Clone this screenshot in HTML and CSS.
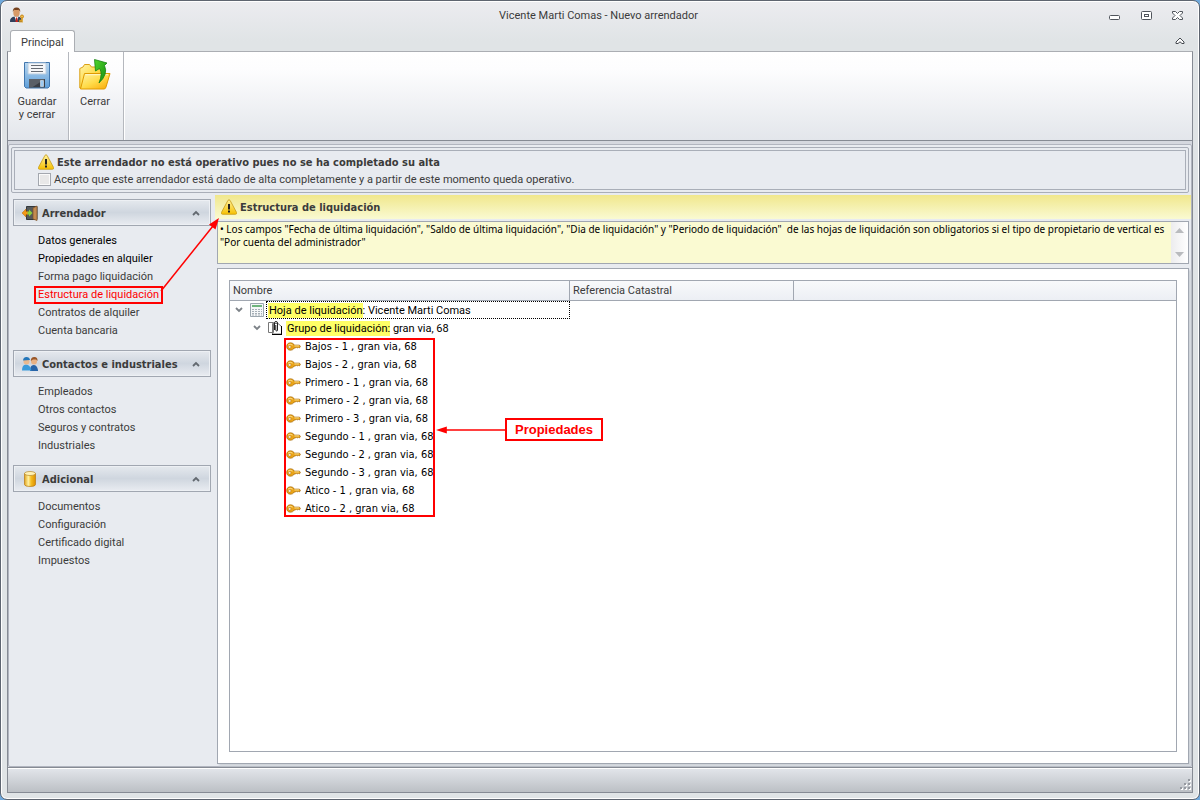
FILE: index.html
```html
<!DOCTYPE html>
<html lang="es">

<head>
    <meta charset="UTF-8">
    <meta name="viewport" content="width=device-width, initial-scale=1.0">
    <title>Vicente Marti Comas - Nuevo arrendador</title>
    <link rel="stylesheet" href="styles.css">
</head>

<body>
    <!-- shared icons -->
    <svg class="sprite">
        <defs>
            <linearGradient id="gold" x1="0" y1="0" x2="0" y2="1">
                <stop offset="0" stop-color="#fff3a0" />
                <stop offset="1" stop-color="#f6c000" />
            </linearGradient>
            <linearGradient id="folder" x1="0" y1="0" x2="1" y2="1">
                <stop offset="0" stop-color="#fff3a8" />
                <stop offset="0.5" stop-color="#ffdc4a" />
                <stop offset="1" stop-color="#f9a602" />
            </linearGradient>
            <linearGradient id="disk" x1="0" y1="0" x2="0" y2="1">
                <stop offset="0" stop-color="#b9d7f0" />
                <stop offset="1" stop-color="#5f9fd9" />
            </linearGradient>
            <linearGradient id="green" x1="0" y1="0" x2="1" y2="1">
                <stop offset="0" stop-color="#4fd62a" />
                <stop offset="1" stop-color="#158a12" />
            </linearGradient>
            <linearGradient id="barrel" x1="0" y1="0" x2="1" y2="0">
                <stop offset="0" stop-color="#e2a51c" />
                <stop offset="0.35" stop-color="#fff0a0" />
                <stop offset="0.6" stop-color="#f5bd20" />
                <stop offset="1" stop-color="#dc8f00" />
            </linearGradient>
        </defs>
        <symbol id="warning" viewBox="0 0 16 16">
            <path d="M7 1.300Q8 .2 9 1.300L15.600 13.500Q16 15.300 14.500 15.300H1.500Q0 15.300.4 13.500Z" fill="url(#gold)" stroke="#c79a18" stroke-width=".8" />
            <path d="M7 5h2v5.500H7zM7 11.500h2v2H7z" fill="#222" />
        </symbol>
        <symbol id="key" viewBox="0 0 16 12">
            <path d="M4.500 2C7 2 8.200 3 8.800 4.500H14.500L15.500 6l-1 1.500-1.200-.8-1 1-1.200-1-1 1H8.700C8 9.300 6.500 10 4.500 10 2 10 .6 8.200.6 6S2 2 4.500 2Z" fill="#e9a318" stroke="#a76a08" stroke-width=".8" />
            <path d="M2 4.500Q4 2.300 7 4.500M9 5.400h5" stroke="#ffe591" fill="none" />
            <ellipse cx="3.800" cy="6.500" rx="1.500" ry="1.200" fill="#fff" stroke="#a76a08" stroke-width=".5" />
        </symbol>
        <symbol id="up" viewBox="0 0 8 6">
            <path d="M1 5 4 2 7 5" fill="none" stroke="#636970" stroke-width="1.800" />
        </symbol>
        <symbol id="down" viewBox="0 0 8 6">
            <path d="M1 1 4 4 7 1" fill="none" stroke="#7d8288" stroke-width="1.800" />
        </symbol>
    </svg>

    <div class="window">
        <header class="titlebar">
            <svg class="app-icon" viewBox="0 0 16 16">
                <path d="M1 15q-.5-5 5-5.500h3q4 .5 4 5.500Z" fill="#30405c" />
                <path d="M5.500 9.500 7.500 15l2-5.500Z" fill="#fff" />
                <path d="M7 10.500h1.200l.6 4.500H6.500Z" fill="#d02018" />
                <ellipse cx="7.500" cy="5.500" rx="3.200" ry="4.300" fill="#d99a68" />
                <path d="M3.800 5Q3.500.5 7.500.4 11.500.3 11.200 5q-.8-2-1.700-2.200-2.500.6-4.200 0Q4.300 3.500 3.800 5Z" fill="#75401e" />
                <circle cx="13" cy="9.500" r="1.500" fill="#f0bd4a" stroke="#c98716" />
                <path d="M13 11v4.500M13 13.500h-2v2" fill="none" stroke="#d89a20" stroke-width="1.500" />
            </svg>
            <span class="title">Vicente Marti Comas - Nuevo arrendador</span>
            <div class="controls">
                <button type="button" aria-label="Minimizar">
                    <svg viewBox="0 0 13 11"><rect x="1.500" y="5.500" width="10" height="4" rx="1" fill="#fff" stroke="#50555c" /></svg>
                </button>
                <button type="button" aria-label="Restaurar">
                    <svg viewBox="0 0 13 11"><rect x="1.500" y="1.500" width="10" height="8" rx="1" fill="#fff" stroke="#50555c" /><rect x="4.500" y="4.500" width="4" height="2" fill="#fff" stroke="#50555c" /></svg>
                </button>
                <button type="button" aria-label="Cerrar ventana">
                    <svg viewBox="0 0 13 11"><path d="M.5 1.500h3l2 2 2-2h3v1.500L8 5.500l2.500 2.500v1.500h-3l-2-2-2 2h-3V8L3 5.500.5 3Z" fill="#fff" stroke="#50555c" /></svg>
                </button>
            </div>
        </header>

        <div class="tabs">
            <button type="button" class="tab">Principal</button>
            <button type="button" class="collapse" aria-label="Contraer">
                <svg viewBox="0 0 10 8"><path d="M5 1 9 5v1.500H7L5 4.800 3 6.500H1V5Z" fill="#fff" stroke="#454a50" /></svg>
            </button>
        </div>

        <div class="ribbon">
            <button type="button" class="tool save">
                <svg viewBox="0 0 32 32">
                    <path d="M3.500 3.500h25v24l-1.500 1.500H5L3.500 27.500Z" fill="url(#disk)" stroke="#4277ae" />
                    <path d="M7 4h18v11H7z" fill="#f5f6f8" stroke="#b7cce0" />
                    <path d="M10 6.500h12M10 9.500h12M10 12.500h12" stroke="#666b73" />
                    <path d="M8 20h16v8.500H8z" fill="#3a3e45" />
                    <path d="M8 20h16l-13 8.500H8z" fill="#5a5f66" />
                    <path d="M19.500 21.500h3v6h-3z" fill="#9dcbf2" stroke="#e1effb" stroke-width=".6" />
                </svg>
                <span>Guardar<br>y cerrar</span>
            </button>
            <button type="button" class="tool close">
                <svg viewBox="0 0 32 32">
                    <path d="M.8 29V9.500L4 8l1.500-2.500h5L12.500 8H23l1.500 2v19Z" fill="url(#folder)" stroke="#dba015" />
                    <path d="M1.500 30 5.500 14.500h25.500L27 28q-.5 2-2 2Z" fill="url(#folder)" stroke="#e09a00" />
                    <path d="M6.500 15.700H29" stroke="#fff8cc" />
                    <path d="M15.500.5 28 4l-2.500 2.500Q29.500 15 20 24q4-10 .5-14.500L16.500 12Z" fill="url(#green)" stroke="#158212" stroke-width=".8" />
                </svg>
                <span>Cerrar</span>
            </button>
        </div>

        <div class="workspace">
            <div class="frame">
                <div class="notice">
                    <div class="notice-inner">
                        <strong><svg class="warn"><use href="#warning" /></svg>Este arrendador no está operativo pues no se ha completado su alta</strong>
                        <label><input type="checkbox">Acepto que este arrendador está dado de alta completamente y a partir de este momento queda operativo.</label>
                    </div>
                </div>

                <div class="columns">
                    <nav class="sidebar">
                        <section>
                            <button type="button" class="group">
                                <svg class="group-icon" viewBox="0 0 16 16">
                                    <path d="M4.500 1.500H15v13H4.500z" fill="#555a5c" stroke="#33383b" />
                                    <path d="m11 3 4-2v14.500L11 14Z" fill="#c28b51" stroke="#805127" stroke-width=".7" />
                                    <path d="M0 8 4 4v2.500h2v3H4V12Z" fill="#f39a15" stroke="#bd6709" stroke-width=".5" />
                                    <path d="M10.500 8 7 4.500v2H5.500v3H7v2Z" fill="#8bd03c" />
                                </svg>
                                <span>Arrendador</span>
                                <svg class="chevron"><use href="#up" /></svg>
                            </button>
                            <ul>
                                <li><a href="#" class="enabled">Datos generales</a></li>
                                <li><a href="#" class="enabled">Propiedades en alquiler</a></li>
                                <li><a href="#">Forma pago liquidación</a></li>
                                <li><a href="#" class="marked">Estructura de liquidación</a></li>
                                <li><a href="#">Contratos de alquiler</a></li>
                                <li><a href="#">Cuenta bancaria</a></li>
                            </ul>
                        </section>
                        <section>
                            <button type="button" class="group">
                                <svg class="group-icon" viewBox="0 0 16 16">
                                    <path d="M8 15q0-6 3.500-6t4.500 5v1Z" fill="#2864a8" />
                                    <circle cx="12" cy="5.500" r="3" fill="#e8b184" />
                                    <path d="M8.800 5q0-4 3.500-4t3.200 4L14 3.500H11Z" fill="#9a5728" />
                                    <path d="M0 14.500Q0 8.500 4 8.500t5.500 6Z" fill="#3a9bdb" />
                                    <circle cx="4.500" cy="5.500" r="3" fill="#e9b98e" />
                                    <path d="M1 4.500Q1.200 1 4.500 1 7.500 1 8 4Z" fill="#2476b9" />
                                </svg>
                                <span>Contactos e industriales</span>
                                <svg class="chevron"><use href="#up" /></svg>
                            </button>
                            <ul>
                                <li><a href="#">Empleados</a></li>
                                <li><a href="#">Otros contactos</a></li>
                                <li><a href="#">Seguros y contratos</a></li>
                                <li><a href="#">Industriales</a></li>
                            </ul>
                        </section>
                        <section>
                            <button type="button" class="group">
                                <svg class="group-icon" viewBox="0 0 16 16">
                                    <path d="M2.500 2.500v11q0 2 5.500 2t5.500-2v-11Z" fill="url(#barrel)" stroke="#b87913" stroke-width=".7" />
                                    <ellipse cx="8" cy="2.500" rx="5.500" ry="2" fill="#fff1b4" stroke="#b8892c" stroke-width=".7" />
                                </svg>
                                <span>Adicional</span>
                                <svg class="chevron"><use href="#up" /></svg>
                            </button>
                            <ul>
                                <li><a href="#">Documentos</a></li>
                                <li><a href="#">Configuración</a></li>
                                <li><a href="#">Certificado digital</a></li>
                                <li><a href="#">Impuestos</a></li>
                            </ul>
                        </section>
                        <svg class="arrow-menu" viewBox="0 0 62 80">
                            <path d="M3 74 55 9" stroke="#f00" stroke-width="1.500" />
                            <path d="M61 1 57.500 12.500 51 7.500Z" fill="#f00" />
                        </svg>
                    </nav>

                    <main class="content">
                        <h1><svg class="warn"><use href="#warning" /></svg>Estructura de liquidación</h1>
                        <div class="message">
                            <textarea readonly aria-label="Avisos">• Los campos "Fecha de última liquidación", "Saldo de última liquidación", "Dia de liquidación" y "Periodo de liquidación"  de las hojas de liquidación son obligatorios si el tipo de propietario de vertical es
"Por cuenta del administrador"</textarea>
                            <div class="scroll">
                                <button type="button" aria-label="Subir"><svg viewBox="0 0 9 5"><path d="M0 5 4.500 0 9 5Z" fill="#b9bbbe" /></svg></button>
                                <button type="button" aria-label="Bajar"><svg viewBox="0 0 9 5"><path d="M0 0 4.500 5 9 0Z" fill="#b9bbbe" /></svg></button>
                            </div>
                        </div>

                        <div class="panel">
                            <div class="tree">
                                <table>
                                    <colgroup>
                                        <col class="col-name">
                                        <col class="col-ref">
                                        <col>
                                    </colgroup>
                                    <thead>
                                        <tr>
                                            <th>Nombre</th>
                                            <th>Referencia Catastral</th>
                                            <th></th>
                                        </tr>
                                    </thead>
                                    <tbody>
                                        <tr>
                                            <td>
                                                <div class="node">
                                                    <svg class="twist"><use href="#down" /></svg>
                                                    <svg class="node-icon" viewBox="0 0 14 14">
                                                        <path d="M.5.5h13v13H.5z" fill="#f5f7f8" stroke="#9ba6ae" />
                                                        <path d="M2 2h10v2H2z" fill="#6fb57d" />
                                                        <path d="M2 6.500h10M2 8.500h10M2 10.500h10M2 12h10" stroke="#a5aeb6" stroke-dasharray="2 1" />
                                                    </svg>
                                                    <span class="focused"><mark>Hoja de liquidación</mark>: Vicente Marti Comas</span>
                                                </div>
                                            </td>
                                            <td></td>
                                            <td></td>
                                        </tr>
                                        <tr>
                                            <td>
                                                <div class="node level2">
                                                    <svg class="twist"><use href="#down" /></svg>
                                                    <svg class="node-icon" viewBox="0 0 14 14">
                                                        <path d="M.5 1.500h5v10h-5zM4.500 2.500H10l3.500 3v7.500h-9z" fill="#fff" stroke="#777" />
                                                        <path d="M6.500 9V2q0-1.500 1.500-1.500T9.500 2v7q0 1-.8 1T7.800 9V4" fill="none" stroke="#222" />
                                                        <path d="M13.500 5v9M4 13.500h9.500" stroke="#000" />
                                                    </svg>
                                                    <span class="text"><mark>Grupo de liquidación:</mark> gran via, 68</span>
                                                </div>
                                            </td>
                                            <td></td>
                                            <td></td>
                                        </tr>
                                        <tr><td><div class="node level3"><svg class="key"><use href="#key" /></svg>Bajos - 1 , gran via, 68</div></td><td></td><td></td></tr>
                                        <tr><td><div class="node level3"><svg class="key"><use href="#key" /></svg>Bajos - 2 , gran via, 68</div></td><td></td><td></td></tr>
                                        <tr><td><div class="node level3"><svg class="key"><use href="#key" /></svg>Primero - 1 , gran via, 68</div></td><td></td><td></td></tr>
                                        <tr><td><div class="node level3"><svg class="key"><use href="#key" /></svg>Primero - 2 , gran via, 68</div></td><td></td><td></td></tr>
                                        <tr><td><div class="node level3"><svg class="key"><use href="#key" /></svg>Primero - 3 , gran via, 68</div></td><td></td><td></td></tr>
                                        <tr><td><div class="node level3"><svg class="key"><use href="#key" /></svg>Segundo - 1 , gran via, 68</div></td><td></td><td></td></tr>
                                        <tr><td><div class="node level3"><svg class="key"><use href="#key" /></svg>Segundo - 2 , gran via, 68</div></td><td></td><td></td></tr>
                                        <tr><td><div class="node level3"><svg class="key"><use href="#key" /></svg>Segundo - 3 , gran via, 68</div></td><td></td><td></td></tr>
                                        <tr><td><div class="node level3"><svg class="key"><use href="#key" /></svg>Atico - 1 , gran via, 68</div></td><td></td><td></td></tr>
                                        <tr><td><div class="node level3"><svg class="key"><use href="#key" /></svg>Atico - 2 , gran via, 68</div></td><td></td><td></td></tr>
                                    </tbody>
                                </table>
                                <!-- callout over the tree -->
                                <div class="key-box"></div>
                                <div class="callout">
                                    <svg viewBox="0 0 70 8"><path d="M8 4h62" stroke="#f00" stroke-width="1.500" /><path d="M0 4 11 .5v7Z" fill="#f00" /></svg>
                                    <span>Propiedades</span>
                                </div>
                            </div>
                        </div>
                    </main>
                </div>
            </div>
        </div>

        <footer class="status">
            <svg viewBox="0 0 12 12"><path d="M9 1h2v2H9zM5 5h2v2H5zM9 5h2v2H9zM1 9h2v2H1zM5 9h2v2H5zM9 9h2v2H9z" fill="#fff" transform="translate(1 1)" /><path d="M9 1h2v2H9zM5 5h2v2H5zM9 5h2v2H9zM1 9h2v2H1zM5 9h2v2H5zM9 9h2v2H9z" fill="#9599a0" /></svg>
        </footer>
    </div>
</body>

</html>
```
FILE: styles.css
```css
* {
    box-sizing: border-box;
    margin: 0;
    padding: 0;
}

body {
    background-color: #6fa8dc;
    color: #3b3b3b;
    font: 11px/13px Roboto, "Liberation Sans", sans-serif;
}

button {
    border: none;
    background: none;
    color: inherit;
    font: inherit;
}

a {
    color: inherit;
    text-decoration: none;
}

ul {
    list-style: none;
}

svg {
    display: block;
    flex: none;
}

.sprite {
    position: absolute;
    width: 0;
    height: 0;
}

.window {
    display: flex;
    flex-direction: column;
    min-height: 100vh;
    padding: 1px 6px 6px;
    border: 1px solid #5e6570;
    border-radius: 7px;
    background: linear-gradient(#ececf0, #e0e4e6 40px, #e0e4e6);
    box-shadow: inset 0 0 0 1px #fff;
}

/* title bar and ribbon */
.titlebar {
    display: flex;
    align-items: center;
    height: 26px;
    padding: 0 8px 0 2px;
}

.app-icon {
    width: 16px;
    height: 16px;
}

.title {
    flex: 1;
    padding-left: 64px;
    text-align: center;
}

.controls {
    display: flex;
    gap: 19px;
}

.controls svg {
    width: 13px;
    height: 11px;
}

.tabs {
    display: flex;
    justify-content: space-between;
    height: 23px;
    padding: 0 8px 0 3px;
    align-items: flex-end;
}

.tab {
    z-index: 1;
    height: 22px;
    margin-bottom: -1px;
    padding: 1px 10px 0;
    border: 1px solid #abaeb3;
    border-bottom: none;
    border-radius: 3px 3px 0 0;
    background-color: #fff;
}

.collapse {
    padding-bottom: 6px;
}

.collapse svg {
    width: 10px;
    height: 8px;
}

.ribbon {
    display: flex;
    height: 90px;
    border: 1px solid #868b94;
    border-top-color: #abaeb3;
    background: linear-gradient(#fff, #fdfdfe 20%, #e3e6eb);
}

.tool {
    display: flex;
    flex-direction: column;
    align-items: center;
    gap: 4px;
    padding-top: 7px;
    padding-right: 2px;
    border-right: 1px solid #b5b8be;
    box-shadow: 1px 0 #fff;
}

.tool svg {
    width: 32px;
    height: 32px;
}

.save {
    width: 61px;
}

.close {
    width: 55px;
}

/* workspace */
.workspace {
    flex: 1;
    display: flex;
    padding-top: 3px;
    border: 1px solid #868b94;
    border-width: 0 1px;
    background-color: #d5d8df;
}

.frame {
    flex: 1;
    display: flex;
    flex-direction: column;
    min-width: 0;
    padding: 2px;
    border: 1px solid #b1b5bf;
    border-radius: 2px;
    background-color: #e8ebf0;
}

.notice {
    padding: 2px;
    border: 1px solid #a9aeb8;
    border-radius: 2px;
}

.notice-inner {
    display: flex;
    flex-direction: column;
    gap: 3px;
    padding: 3px 0;
    padding-left: 23px;
    border: 1px solid #a9aeb8;
}

.warn {
    width: 16px;
    height: 16px;
}

.notice strong,
.content h1 {
    display: flex;
    align-items: center;
    gap: 3px;
}

.notice strong,
.content h1,
.group {
    font: bold 11px/13px "DejaVu Sans Condensed", "DejaVu Sans", sans-serif;
}

.notice label {
    display: flex;
    align-items: center;
    gap: 3px;
}

.notice input {
    appearance: none;
    width: 13px;
    height: 13px;
    border: 1px solid #a3a7ae;
    background-color: #e8e8e8;
    box-shadow: inset 0 0 0 1px #fafafa;
}

.columns {
    flex: 1;
    display: flex;
    gap: 6px;
    padding-top: 2px;
}

.sidebar {
    position: relative;
    width: 200px;
    padding: 4px 0 0 2px;
}

.sidebar section {
    margin-bottom: 10px;
}

.group {
    display: flex;
    align-items: center;
    gap: 4px;
    width: 100%;
    height: 27px;
    padding: 1px 10px 0 8px;
    border: 1px solid #a1a7b1;
    background: linear-gradient(#e5e9ee, #cfd6df 50%, #e9ecf1);
    box-shadow: inset 0 0 0 1px #edf0f4;
    text-align: left;
}

.group span {
    flex: 1;
}

.group-icon {
    width: 16px;
    height: 16px;
}

.chevron,
.twist {
    width: 8px;
    height: 6px;
}

.sidebar ul {
    padding: 6px 0 0 21px;
}

.sidebar li {
    display: flex;
    height: 18px;
}

.sidebar a {
    padding: 0 2px;
    border: 2px solid transparent;
    line-height: 14px;
}

.sidebar .enabled {
    color: #000;
}

.sidebar .marked {
    border-color: #f00;
    color: #f00;
}

.arrow-menu {
    position: absolute;
    top: 22px;
    left: 147px;
    z-index: 1;
    width: 62px;
    height: 80px;
}

.content {
    flex: 1;
    display: flex;
    flex-direction: column;
    min-width: 0;
}

.content h1 {
    height: 24px;
    margin: 0 -2px 2px -2px;
    padding-left: 6px;
    background: linear-gradient(#f0e78c, #fafad2);
}

.message {
    display: flex;
    height: 43px;
    border: 1px solid #a1a7b1;
    background-color: #fafad2;
}

.message textarea {
    flex: 1;
    min-width: 0;
    padding: 1px 2px;
    border: none;
    outline: none;
    resize: none;
    overflow: hidden;
    background: none;
    color: #000;
    font: 10px/13px "Noto Sans", "Open Sans", sans-serif;
    white-space: pre;
}

.scroll {
    display: flex;
    flex-direction: column;
    justify-content: space-between;
    align-items: center;
    width: 17px;
    padding: 6px 0;
    background: linear-gradient(90deg, #ececee, #fff);
}

.scroll svg {
    width: 9px;
    height: 5px;
}

.panel {
    flex: 1;
    display: flex;
    margin-top: 4px;
    padding: 11px;
    border: 1px solid #a1a7b1;
    background-color: #fff;
    box-shadow: 2px 2px 2px #cdd2d9;
}

/* tree */
.tree {
    position: relative;
    flex: 1;
    border: 1px solid #a1a7b1;
    color: #000;
}

table {
    width: 100%;
    border-collapse: separate;
    border-spacing: 0;
    table-layout: fixed;
}

.col-name {
    width: 340px;
}

.col-ref {
    width: 224px;
}

th {
    height: 20px;
    padding: 0 3px;
    border-right: 1px solid #a1a7b1;
    border-bottom: 1px solid #a1a7b1;
    background: linear-gradient(#f8f9fb, #eceff4);
    color: #3b3b3b;
    font-weight: normal;
    text-align: left;
}

th:last-child {
    border-right: none;
}

.node {
    display: flex;
    align-items: center;
    height: 18px;
    padding-left: 5px;
    white-space: nowrap;
}

.level2 {
    padding-left: 23px;
}

.level3 {
    gap: 4px;
    padding-left: 56px;
    font-family: "DejaVu Sans Condensed", "DejaVu Sans", sans-serif;
}

.node-icon {
    width: 14px;
    height: 14px;
    margin: 0 2px 0 7px;
}

.focused {
    flex: 1;
    height: 18px;
    padding-left: 1px;
    border: 1px dotted #000;
    line-height: 17px;
}

.text {
    padding-left: 2px;
}

mark {
    padding: 1px 0 1px 1px;
    background-color: #ff6;
    color: inherit;
}

.key {
    width: 15px;
    height: 11px;
}

.key-box {
    position: absolute;
    top: 57px;
    left: 54px;
    width: 151px;
    height: 179px;
    border: 2px solid #f00;
}

.callout {
    position: absolute;
    top: 137px;
    left: 206px;
    display: flex;
    align-items: center;
}

.callout svg {
    width: 69px;
    height: 8px;
}

.callout span {
    padding: 2px 8px;
    border: 2px solid #f00;
    background-color: #fff;
    color: #f00;
    font: bold 13px/15px "Liberation Sans", sans-serif;
}

.status {
    display: flex;
    justify-content: flex-end;
    align-items: flex-end;
    height: 26px;
    padding: 0 1px 2px;
    border: 1px solid #868b94;
    background: linear-gradient(#e3e6eb, #bcc0c5);
    box-shadow: inset 0 1px #fff;
}

.status svg {
    width: 12px;
    height: 12px;
}
```
